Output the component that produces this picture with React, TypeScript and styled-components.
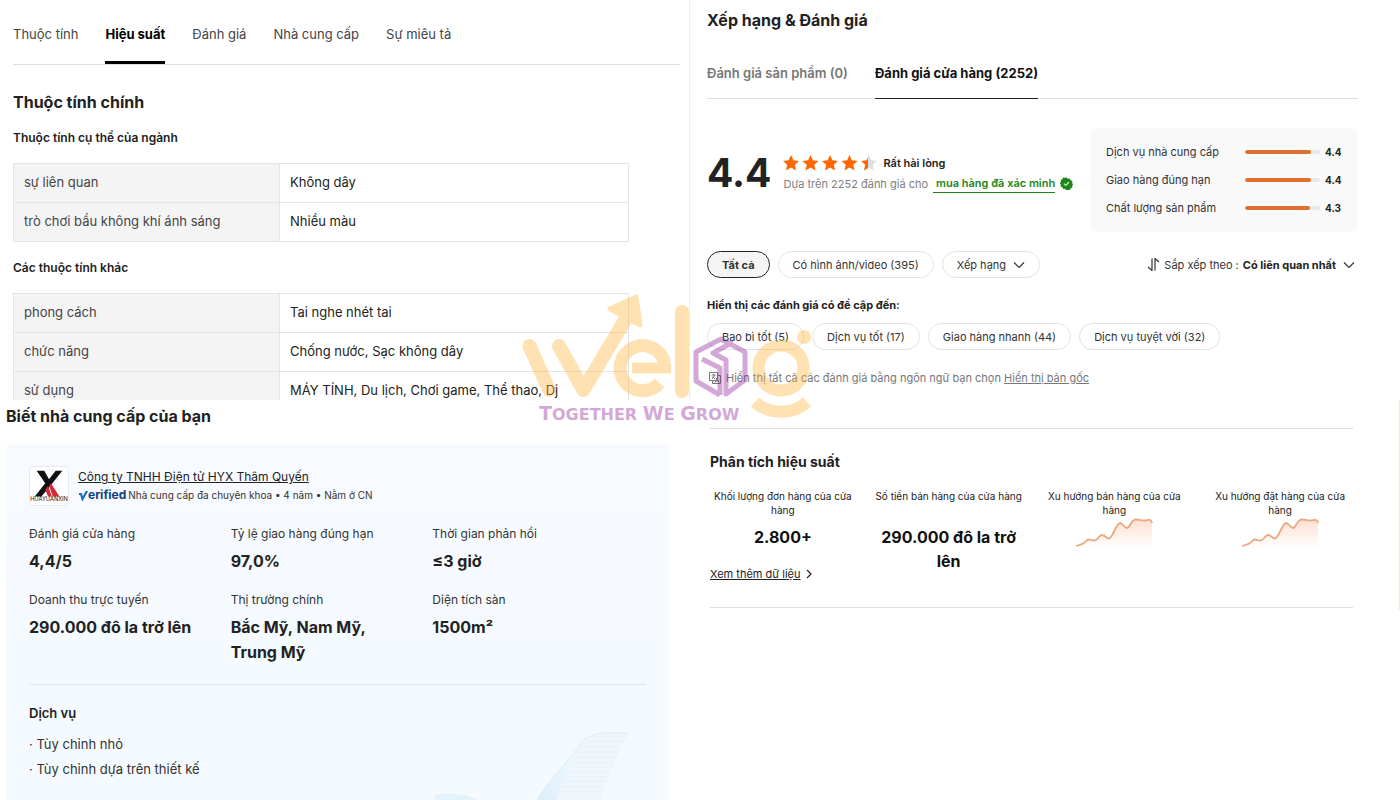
import React from "react";
import styled, { createGlobalStyle } from "styled-components";

const GlobalStyle = createGlobalStyle`
  *, *::before, *::after { box-sizing: border-box; }
  body {
    margin: 0;
    background: #fff;
    color: #222;
    font-family: Inter, "Noto Sans", sans-serif;
    font-size: 13px;
  }
  h2, h3, p, ul, dl, dd { margin: 0; padding: 0; }
  button, select { font: inherit; color: inherit; }
`;

const Page = styled.main`
  position: relative;
  display: grid;
  grid-template-columns: 69fr 71fr;
  height: 100vh;
  overflow: hidden;
`;

const Column = styled.div`
  display: flex;
  flex-direction: column;
  min-width: 0;
`;

const TopPanel = styled.section<{ $divided?: boolean }>`
  flex: none;
  height: 400px;
  overflow: hidden;
  padding: ${(p) => (p.$divided ? "8px 42px 0 17px" : "9px 10px 0 13px")};
  border-left: ${(p) => (p.$divided ? "1px solid #eee" : "none")};
  margin-left: ${(p) => (p.$divided ? "-1px" : "0")};
`;

const Title = styled.h2<{ $size?: number }>`
  font-size: ${(p) => p.$size ?? 16}px;
  line-height: 24px;
  font-weight: 700;
`;

const Subtitle = styled.h3<{ $small?: boolean }>`
  font-size: ${(p) => (p.$small ? 11 : 12)}px;
  line-height: 20px;
  font-weight: ${(p) => (p.$small ? 700 : 600)};
`;

/* attributes */

const Tabs = styled.nav`
  display: flex;
  gap: 27px;
  height: 56px;
  border-bottom: 1px solid #ddd;
  margin-bottom: 25px;
`;

const Tab = styled.button<{ $active?: boolean }>`
  padding: 0 0 2px;
  background: none;
  border: 0;
  border-bottom: 3px solid ${(p) => (p.$active ? "#000" : "transparent")};
  color: ${(p) => (p.$active ? "#000" : "#444")};
  font-size: 13px;
  font-weight: ${(p) => (p.$active ? 700 : 400)};
  white-space: nowrap;
`;

const AttributeGroup = styled.div`
  margin-top: 14px;
`;

const AttributeTable = styled.table`
  width: calc(100% - 51px);
  margin: 15px 0 16px;
  border-collapse: collapse;
  table-layout: fixed;
  font-size: 13px;

  th, td {
    height: 39px;
    padding: 0 10px 2px;
    border: 1px solid #e4e4e4;
    text-align: left;
    font-weight: 400;
  }
  th { width: 266px; background: #f4f4f4; color: #444; }
  td { color: #222; }
`;

/* supplier */

const SupplierPanel = styled.section`
  display: flex;
  flex-direction: column;
  flex: 1;
  padding: 4px 21px 0 6px;
`;

const SupplierCard = styled.div`
  position: relative;
  flex: 1;
  margin-top: 16px;
  padding: 22px 23px 0;
  border-radius: 4px 4px 0 0;
  background: linear-gradient(180deg, #f7fafe, #f4fafe);
`;

const WingArt = styled.svg`
  position: absolute;
  right: 40px;
  bottom: 0;
  width: 196px;
  height: 68px;
  opacity: 0.7;
`;

const Company = styled.header`
  display: flex;
  gap: 9px;
  align-items: center;
`;

const CompanyLogo = styled.svg`
  width: 40px;
  height: 40px;
  border: 1px solid #e6e9ee;
  border-radius: 4px;
  background: #fff;
`;

const CompanyLink = styled.a`
  display: block;
  color: #222;
  font-size: 12px;
  line-height: 18px;
`;

const CompanyMeta = styled.p`
  display: flex;
  align-items: center;
  gap: 2px;
  font-size: 10px;
  line-height: 18px;
  color: #333;
`;

const Verified = styled.strong`
  display: flex;
  align-items: center;
  color: #0c3f88;
  font-size: 12px;
  font-weight: 700;
`;

const Facts = styled.dl`
  display: grid;
  grid-template-columns: repeat(3, 1fr);
  row-gap: 16px;
  margin-top: 18px;
  padding: 0 12px 19px 0;
  border-bottom: 1px solid #dfe6ec;

  dt { font-size: 12px; line-height: 20px; color: #333; margin-bottom: 5px; }
  dd { font-size: 16px; line-height: 25px; font-weight: 700; color: #222; max-width: 180px; }
`;

const Services = styled.ul`
  list-style: none;
  margin-top: 9px;
  font-size: 13px;
  line-height: 25px;
  color: #333;
`;

const ServicesTitle = styled.h3`
  margin-top: 18px;
  font-size: 13px;
  line-height: 20px;
  font-weight: 600;
`;

/* reviews */

const ReviewTabs = styled.nav`
  display: flex;
  gap: 27px;
  height: 53px;
  margin-top: 14px;
  border-bottom: 1px solid #ddd;
`;

const ReviewTab = styled.button<{ $active?: boolean }>`
  padding: 2px 0 0;
  margin-bottom: -1px;
  background: none;
  border: 0;
  border-bottom: 1px solid ${(p) => (p.$active ? "#222" : "transparent")};
  color: ${(p) => (p.$active ? "#111" : "#767676")};
  font-size: 13px;
  font-weight: ${(p) => (p.$active ? 700 : 600)};
`;

const Summary = styled.div`
  display: flex;
  justify-content: space-between;
  margin-top: 29px;
`;

const Score = styled.div`
  display: flex;
  align-items: center;
  gap: 12px;
  height: 90px;
`;

const ScoreValue = styled.strong`
  font-size: 39px;
  line-height: 48px;
  font-weight: 700;
`;

const ScoreLine = styled.div`
  display: flex;
  align-items: center;
  gap: 5px;
  height: 21px;
  font-size: 11px;
  color: #808080;
  white-space: nowrap;

  b { color: #222; font-weight: 600; }
  svg { flex: none; }
`;

const VerifiedPurchase = styled.a`
  padding: 0 0 0 3px;
  border-bottom: 1px solid #1b8717;
  color: #1b8717;
  line-height: 17px;
  font-weight: 600;
  text-decoration: none;
`;

const RatingBox = styled.div`
  display: flex;
  flex: none;
  flex-direction: column;
  justify-content: center;
  width: 268px;
  height: 104px;
  padding: 0 17px 0 16px;
  border-radius: 6px;
  background: #f9f9f9;
`;

const RatingRow = styled.div`
  display: flex;
  align-items: center;
  height: 28px;
  font-size: 11px;
  color: #333;

  span { flex: 1; }
  b { width: 16px; margin-left: 5px; font-size: 10px; font-weight: 700; color: #222; }
`;

const Track = styled.div`
  width: 75px;
  height: 4px;
  border-radius: 2px;
  background: #e8e8e8;
  overflow: hidden;
`;

const Fill = styled.div`
  height: 100%;
  border-radius: 2px;
  background: #e0702c;
`;

const Toolbar = styled.div`
  display: flex;
  align-items: center;
  justify-content: space-between;
  margin-top: 19px;
`;

const Pills = styled.div`
  display: flex;
  gap: 8px;
`;

const Pill = styled.button<{ $active?: boolean }>`
  height: 27px;
  padding: 0 14px;
  border: 1px solid ${(p) => (p.$active ? "#222" : "#e2e2e2")};
  border-radius: 14px;
  background: ${(p) => (p.$active ? "#f5f5f5" : "#fff")};
  color: #333;
  font-size: 11px;
  font-weight: ${(p) => (p.$active ? 700 : 400)};
  white-space: nowrap;
`;

const SelectPill = styled.label`
  display: flex;
  align-items: center;
  gap: 7px;
  height: 27px;
  padding: 0 14px;
  border: 1px solid #e2e2e2;
  border-radius: 14px;
  font-size: 11px;
  color: #333;
`;

const PlainSelect = styled.select`
  appearance: none;
  field-sizing: content;
  padding: 0;
  border: 0;
  background: none;
`;

const SortLabel = styled.label`
  display: flex;
  align-items: center;
  gap: 4px;
  padding-right: 3px;
  font-size: 11px;
  color: #333;

  select { color: #222; font-weight: 700; }
  svg:last-child { margin-left: 3px; }
`;

const Mentions = styled.div`
  margin: 17px 0 18px;

  h3 { margin-bottom: 8px; }
`;

const TranslateNote = styled.p`
  display: flex;
  align-items: center;
  gap: 4px;
  padding-left: 1px;
  font-size: 11px;
  line-height: 20px;
  color: #777;

  a { color: #777; }
`;

/* performance */

const Performance = styled.section`
  height: 210px;
  padding: 28px 46px 0 20px;
  border-right: 1px solid #f0e9e7;
`;

const PerformanceBody = styled.div`
  height: 180px;
  padding-top: 21px;
  border-top: 1px solid #ddd;
  border-bottom: 1px solid #ddd;
`;

const Stats = styled.div`
  display: grid;
  grid-template-columns: repeat(4, 1fr);
  gap: 20px;
  height: 76px;
  margin-top: 15px;
`;

const Stat = styled.div`
  display: flex;
  flex-direction: column;
  align-items: center;
  text-align: center;
`;

const StatLabel = styled.p<{ $tall?: boolean }>`
  min-height: ${(p) => (p.$tall ? "36px" : "28px")};
  margin: 0 -4px;
  font-size: 10px;
  line-height: 14px;
  color: #222;
`;

const StatValue = styled.strong`
  font-size: 16px;
  line-height: 24px;
  font-weight: 700;
  color: #111;
`;

const MoreLink = styled.a`
  display: inline-flex;
  align-items: center;
  gap: 5px;
  color: #222;
  font-size: 11px;
  line-height: 16px;
  text-decoration: none;

  span { text-decoration: underline; }
`;

const Watermark = styled.svg`
  position: absolute;
  left: 520px;
  top: 290px;
  width: 300px;
  height: 135px;
  opacity: 0.4;
  pointer-events: none;
`;

const Chevron = () => (
  <svg width="12" height="8" viewBox="0 0 12 8" fill="none" stroke="#333" strokeWidth="1.2">
    <path d="M1 1.5l5 5 5-5" />
  </svg>
);

const STAR = "M8 0l2.400 5.200 5.600.7-4.200 3.800 1.200 5.700L8 12.600l-5 2.800 1.200-5.700L0 5.900l5.600-.7z";

const Stars = () => (
  <svg width="95" height="18" viewBox="0 0 95 18" role="img" aria-label="4.4">
    <defs>
      <linearGradient id="partial">
        <stop offset="44%" stopColor="#ff6600" />
        <stop offset="44%" stopColor="#dddfe8" />
      </linearGradient>
    </defs>
    {[0, 1, 2, 3, 4].map((i) => (
      <path
        key={i}
        d={STAR}
        transform={`translate(${i * 19.5} 1)`}
        fill={i < 4 ? "#ff6600" : "url(#partial)"}
      />
    ))}
  </svg>
);

const Sparkline = ({ id }: { id: string }) => (
  <svg width="78" height="32" viewBox="0 0 78 32" fill="none">
    <defs>
      <linearGradient id={id} x1="0" y1="0" x2="0" y2="1">
        <stop offset="0" stopColor="#fde0d2" />
        <stop offset="1" stopColor="#fff" />
      </linearGradient>
    </defs>
    <path
      d="M1 29c3-1 6-1.500 8-3s3-3.500 5-3.500 4 2 7 .5 3-5 6-5 5 4 7 3.500c4-1 7-15 11-15.500 3 0 4 5 7 5s4-8.500 9-8.500c4 0 6 1.500 9 1 3 0 6-2.500 7 2.500V31H1z"
      fill={`url(#${id})`}
    />
    <path
      d="M1 29c3-1 6-1.500 8-3s3-3.500 5-3.500 4 2 7 .5 3-5 6-5 5 4 7 3.500c4-1 7-15 11-15.500 3 0 4 5 7 5s4-8.500 9-8.500c4 0 6 1.500 9 1 3 0 6-2.500 7 2.500"
      stroke="#eba981"
      strokeWidth="1.800"
    />
  </svg>
);

const attributeGroups = [
  {
    title: "Thuộc tính cụ thể của ngành",
    rows: [
      ["sự liên quan", "Không dây"],
      ["trò chơi bầu không khí ánh sáng", "Nhiều màu"],
    ],
  },
  {
    title: "Các thuộc tính khác",
    rows: [
      ["phong cách", "Tai nghe nhét tai"],
      ["chức năng", "Chống nước, Sạc không dây"],
      ["sử dụng", "MÁY TÍNH, Du lịch, Chơi game, Thể thao, Dj"],
    ],
  },
];

const facts = [
  ["Đánh giá cửa hàng", "4,4/5"],
  ["Tỷ lệ giao hàng đúng hạn", "97,0%"],
  ["Thời gian phản hồi", "≤3 giờ"],
  ["Doanh thu trực tuyến", "290.000 đô la trở lên"],
  ["Thị trường chính", "Bắc Mỹ, Nam Mỹ, Trung Mỹ"],
  ["Diện tích sàn", "1500m²"],
];

const ratings: [string, number][] = [
  ["Dịch vụ nhà cung cấp", 4.4],
  ["Giao hàng đúng hạn", 4.4],
  ["Chất lượng sản phẩm", 4.3],
];

export default function App() {
  return (
    <>
      <GlobalStyle />
      <Page>
        <Column>
          <TopPanel>
            <Tabs>
              {["Thuộc tính", "Hiệu suất", "Đánh giá", "Nhà cung cấp", "Sự miêu tả"].map((t) => (
                <Tab key={t} $active={t === "Hiệu suất"}>{t}</Tab>
              ))}
            </Tabs>
            <Title>Thuộc tính chính</Title>
            {attributeGroups.map((g) => (
              <AttributeGroup key={g.title}>
                <Subtitle>{g.title}</Subtitle>
                <AttributeTable>
                  <tbody>
                    {g.rows.map(([name, value]) => (
                      <tr key={name}>
                        <th scope="row">{name}</th>
                        <td>{value}</td>
                      </tr>
                    ))}
                  </tbody>
                </AttributeTable>
              </AttributeGroup>
            ))}
          </TopPanel>

          <SupplierPanel>
            <Title>Biết nhà cung cấp của bạn</Title>
            <SupplierCard>
              <WingArt viewBox="0 0 196 68" fill="none">
                <defs>
                  <linearGradient id="wing" x1="0" y1="1" x2="1" y2="0">
                    <stop offset="0" stopColor="#d3ebfa" />
                    <stop offset="1" stopColor="#f0f7fd" />
                  </linearGradient>
                </defs>
                <path d="M104 68C120 42 138 28 146 14c6-9 14-12 24-13h25c-10 20-20 44-28 67z" fill="#edf6fd" />
                <path d="M104 68C120 42 134 30 143 16l-20 52z" fill="url(#wing)" />
                <path d="M104 68C120 42 138 28 146 14c6-9 14-12 24-13h25" stroke="#d5e6f2" />
                <path
                  d="M160 5h32M152 10h38M147 15h40M144 20h41M141 25h42M138 30h43M136 35h43M134 40h43M132 45h43M130 50h43M128 55h43M126 60h43"
                  stroke="#dfebf6"
                  strokeWidth=".7"
                />
                <path d="M2 68v-5c16-2 30-2 42 5z" fill="#dceffa" />
              </WingArt>
              <Company>
                <CompanyLogo viewBox="0 0 40 40">
                  <path d="M7 4h8l5 9 7-9h7L23 18 12 31H5L16 17z" fill="#111" />
                  <path d="M19 20l4 11h-4l-3-7zM22 17l9 14h-7l-4-11z" fill="#d32a35" />
                  <text x="20" y="36" textAnchor="middle" fontSize="6" fill="#111">HUAYUANXIN</text>
                </CompanyLogo>
                <div>
                  <CompanyLink href="#company">Công ty TNHH Điện tử HYX Thâm Quyến</CompanyLink>
                  <CompanyMeta>
                    <Verified>
                      <svg width="10" height="11" viewBox="0 0 10 11" fill="none" stroke="#1470d0" strokeWidth="2.200">
                        <path d="M1 4h2l1.500 5L9 1" />
                      </svg>
                      erified
                    </Verified>
                    Nhà cung cấp đa chuyên khoa • 4 năm • Nằm ở CN
                  </CompanyMeta>
                </div>
              </Company>
              <Facts>
                {facts.map(([name, value]) => (
                  <div key={name}>
                    <dt>{name}</dt>
                    <dd>{value}</dd>
                  </div>
                ))}
              </Facts>
              <ServicesTitle>Dịch vụ</ServicesTitle>
              <Services>
                <li>· Tùy chỉnh nhỏ</li>
                <li>· Tùy chỉnh dựa trên thiết kế</li>
              </Services>
            </SupplierCard>
          </SupplierPanel>
        </Column>

        <Column>
          <TopPanel $divided>
            <Title>Xếp hạng &amp; Đánh giá</Title>
            <ReviewTabs>
              <ReviewTab>Đánh giá sản phẩm (0)</ReviewTab>
              <ReviewTab $active>Đánh giá cửa hàng (2252)</ReviewTab>
            </ReviewTabs>
            <Summary>
              <Score>
                <ScoreValue>4.4</ScoreValue>
                <div>
                  <ScoreLine>
                    <Stars />
                    <b>Rất hài lòng</b>
                  </ScoreLine>
                  <ScoreLine>
                    Dựa trên 2252 đánh giá cho
                    <VerifiedPurchase href="#verified">mua hàng đã xác minh</VerifiedPurchase>
                    <svg width="13" height="13" viewBox="0 0 13 13">
                      <path
                        d="M6.500.5l1.500 1.200 1.900-.3.700 1.800 1.800.7-.3 1.900 1 1.500-1 1.500.3 1.800-1.800.7-.7 1.800-1.900-.3-1.500 1.200L5 11.800l-1.900.3-.7-1.800-1.800-.7.300-1.800-1-1.500 1-1.500-.3-1.900 1.800-.7.700-1.800 1.900.3z"
                        fill="#1b8717"
                      />
                      <path d="M4 6.600l1.800 1.800L9 5" fill="none" stroke="#c9f0c4" strokeWidth="1.200" />
                    </svg>
                  </ScoreLine>
                </div>
              </Score>
              <RatingBox>
                {ratings.map(([name, value]) => (
                  <RatingRow key={name}>
                    <span>{name}</span>
                    <Track>
                      <Fill style={{ width: `${(value / 5) * 100}%` }} />
                    </Track>
                    <b>{value}</b>
                  </RatingRow>
                ))}
              </RatingBox>
            </Summary>
            <Toolbar>
              <Pills>
                <Pill $active>Tất cả</Pill>
                <Pill>Có hình ảnh/video (395)</Pill>
                <SelectPill>
                  <PlainSelect aria-label="Xếp hạng">
                    <option>Xếp hạng</option>
                  </PlainSelect>
                  <Chevron />
                </SelectPill>
              </Pills>
              <SortLabel>
                <svg width="13" height="13" viewBox="0 0 13 13" fill="none" stroke="#333" strokeWidth="1.200">
                  <path d="M5 .5v12L1 9M8 12.500V.5L12 4" />
                </svg>
                Sắp xếp theo :
                <PlainSelect>
                  <option>Có liên quan nhất</option>
                </PlainSelect>
                <Chevron />
              </SortLabel>
            </Toolbar>
            <Mentions>
              <Subtitle $small>Hiển thị các đánh giá có đề cập đến:</Subtitle>
              <Pills>
                {["Bao bì tốt (5)", "Dịch vụ tốt (17)", "Giao hàng nhanh (44)", "Dịch vụ tuyệt vời (32)"].map((t) => (
                  <Pill key={t}>{t}</Pill>
                ))}
              </Pills>
            </Mentions>
            <TranslateNote>
              <svg width="14" height="14" viewBox="0 0 14 14" fill="none" stroke="#777">
                <path d="M1.500 1.500h8v8h-8zM9.500 4.500h3v8h-8v-3M3.500 4h4M5.500 3v1M4 8l3-4M4.500 5.500L7 8M7 11.500L9 7l2 4.500M8 10h2" />
              </svg>
              <span>
                Hiển thị tất cả các đánh giá bằng ngôn ngữ bạn chọn <a href="#original">Hiển thị bản gốc</a>
              </span>
            </TranslateNote>
          </TopPanel>

          <Performance>
            <PerformanceBody>
              <Title $size={14}>Phân tích hiệu suất</Title>
              <Stats>
                <Stat>
                  <StatLabel $tall>Khối lượng đơn hàng của cửa hàng</StatLabel>
                  <StatValue>2.800+</StatValue>
                </Stat>
                <Stat>
                  <StatLabel $tall>Số tiền bán hàng của cửa hàng</StatLabel>
                  <StatValue>290.000 đô la trở lên</StatValue>
                </Stat>
                <Stat>
                  <StatLabel>Xu hướng bán hàng của cửa hàng</StatLabel>
                  <Sparkline id="sales-trend" />
                </Stat>
                <Stat>
                  <StatLabel>Xu hướng đặt hàng của cửa hàng</StatLabel>
                  <Sparkline id="order-trend" />
                </Stat>
              </Stats>
              <MoreLink href="#more">
                <span>Xem thêm dữ liệu</span>
                <svg width="8" height="10" viewBox="0 0 8 10" fill="none" stroke="#222" strokeWidth="1.200">
                  <path d="M2 1l4 4-4 4" />
                </svg>
              </MoreLink>
            </PerformanceBody>
          </Performance>
        </Column>

        <Watermark viewBox="520 290 300 135" fill="none">
          <g stroke="#ffb540" strokeWidth="14" strokeLinecap="round" strokeLinejoin="round">
            <path d="M529.500 346L549 390M559 346L583.500 390 625 320" />
            <path d="M682 312v79" />
            <path d="M632 368h39" strokeWidth="11" strokeLinecap="butt" />
            <path d="M664.500 363a22.500 22.500 0 1 0-5 20" strokeWidth="13" strokeLinecap="butt" />
            <circle cx="781" cy="368" r="22.500" strokeWidth="12" />
            <path d="M755 402c14 13 38 13 52 0" strokeWidth="12" strokeLinecap="butt" />
          </g>
          <path d="M610 309l26-12 4 28z" fill="#ffb540" stroke="#ffb540" strokeWidth="5" strokeLinejoin="round" />
          <circle cx="804" cy="337" r="7" fill="#ffb540" />
          <path
            d="M720 395l-24-14v-29l25-13 24 13v28l-19 14v-34l-13-7 20-11M702 359l18 9v27"
            stroke="#93299f"
            strokeWidth="5"
            strokeLinejoin="round"
          />
          <text
            x="539"
            y="420"
            fill="#93299f"
            fontFamily="'DejaVu Sans', sans-serif"
            fontWeight="700"
            fontSize="16"
          >
            <tspan fontSize="19">T</tspan>OGETHER <tspan fontSize="19">W</tspan>E <tspan fontSize="19">G</tspan>ROW
          </text>
        </Watermark>
      </Page>
    </>
  );
}
